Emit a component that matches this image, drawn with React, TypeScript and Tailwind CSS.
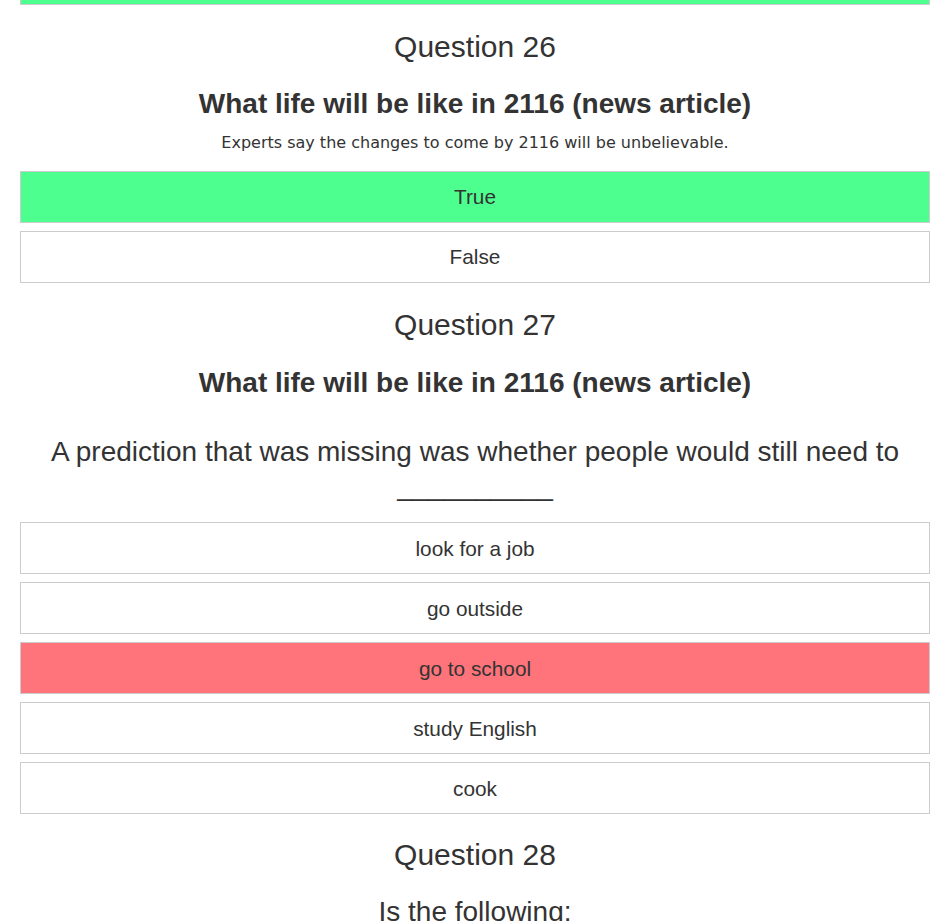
type Option = { label: string; state?: "correct" | "wrong" };

const sans = "font-['Liberation_Sans',Arial,sans-serif]";

function OptionBox({ label, state }: Option) {
  const bg =
    state === "correct"
      ? "bg-[#4dff8e]"
      : state === "wrong"
        ? "bg-[#ff737a]"
        : "bg-white";
  return (
    <div
      className={`${bg} h-[52px] border border-[#cccccc] flex items-center justify-center text-[20.8px] text-[#333333]`}
    >
      {label}
    </div>
  );
}

function Options({ items }: { items: Option[] }) {
  return (
    <div className="flex flex-col gap-[8px] mx-[20px]">
      {items.map((o) => (
        <OptionBox key={o.label} {...o} />
      ))}
    </div>
  );
}

function QuestionTitle({ n, className = "mt-[25px]" }: { n: number; className?: string }) {
  return (
    <h2 className={`${className} text-[30px] leading-[33px] text-center`}>
      Question {n}
    </h2>
  );
}

export default function App() {
  return (
    <div className={`${sans} bg-white min-h-screen text-[#333333] overflow-hidden`}>
      {/* tail of the previous (correct) answer */}
      <div className="mx-[20px] h-[5px] bg-[#4dff8e] border border-t-0 border-[#cccccc]" />

      <QuestionTitle n={26} />
      <h3 className="mt-[25px] text-[28px] leading-[31px] font-bold text-center">
        What life will be like in 2116 (news article)
      </h3>
      <p className="mt-[14px] font-['DejaVu_Sans',Verdana,sans-serif] text-[16px] leading-[20px] text-center">
        Experts say the changes to come by 2116 will be unbelievable.
      </p>
      <div className="mt-[18px]">
        <Options items={[{ label: "True", state: "correct" }, { label: "False" }]} />
      </div>

      <QuestionTitle n={27} />
      <h3 className="mt-[26px] text-[28px] leading-[31px] font-bold text-center">
        What life will be like in 2116 (news article)
      </h3>
      <p className="mt-[37px] text-[28px] leading-[1.2] text-center px-[20px]">
        A prediction that was missing was whether people would still need to
        <br />
        __________
      </p>
      <div className="mt-[20px]">
        <Options
          items={[
            { label: "look for a job" },
            { label: "go outside" },
            { label: "go to school", state: "wrong" },
            { label: "study English" },
            { label: "cook" },
          ]}
        />
      </div>

      <QuestionTitle n={28} className="mt-[24px]" />
      <p className="mt-[24px] text-[28px] leading-[1.2] text-center">
        Is the following:
      </p>
    </div>
  );
}
